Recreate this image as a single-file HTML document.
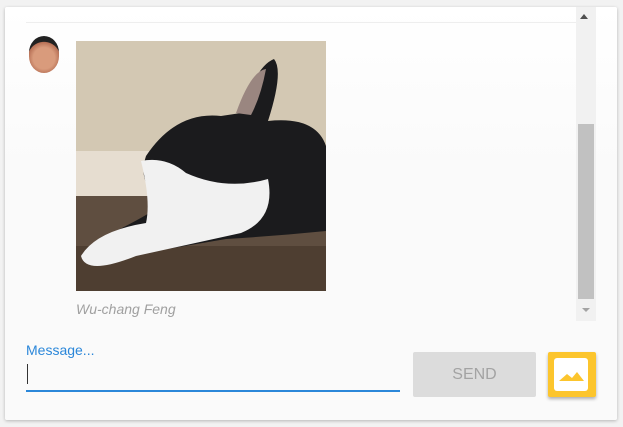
<!DOCTYPE html><html><head><style>
body{margin:0;width:623px;height:427px;background:#f2f2f2;font-family:"Liberation Sans",Arial,sans-serif;position:relative;overflow:hidden}
.card{position:absolute;left:5px;top:7px;width:612px;height:413px;background:linear-gradient(#fff,#fafafa 40%);border-radius:2px;box-shadow:0 1px 3px rgba(0,0,0,.25)}
.a{position:absolute}
</style></head><body>
<div class="card"></div>
<div class="a" style="left:26px;top:22px;width:550px;height:1px;background:#eee"></div>
<div class="a" style="left:576px;top:7px;width:20px;height:314px;background:#f1f1f1"></div>
<div class="a" style="left:580px;top:14px;border-left:4px solid transparent;border-right:4px solid transparent;border-bottom:5px solid #505050"></div>
<div class="a" style="left:578px;top:124px;width:16px;height:175px;background:#c1c1c1"></div>
<div class="a" style="left:582px;top:308px;border-left:4px solid transparent;border-right:4px solid transparent;border-top:4px solid #a3a3a3"></div>
<div class="a" style="left:29px;top:36px;width:30px;height:37px;border-radius:50%/45%;background:radial-gradient(circle at 50% 60%,#d99b7c 40%,#b77055 60%,#222 62%);"></div>
<svg class="a" style="left:76px;top:41px" width="250" height="250" viewBox="0 0 250 250">
<rect width="250" height="250" fill="#c4b8a2"/>
<rect width="250" height="155" fill="#d3c8b3"/>
<rect x="0" y="110" width="75" height="45" fill="#e6ddd0"/>
<rect x="0" y="155" width="250" height="95" fill="#5f4e40"/>
<rect x="0" y="205" width="250" height="45" fill="#4e3e31"/>
<path d="M70 115 Q100 70 145 75 L165 72 Q180 25 198 18 Q208 30 192 80 Q240 75 250 105 L250 190 Q200 195 150 198 L20 220 Q0 210 40 190 Q80 170 90 160 Q60 145 70 115Z" fill="#1b1b1d"/>
<path d="M65 120 Q90 115 110 132 Q150 150 192 138 Q200 178 165 192 L60 215 Q10 235 5 215 Q20 190 70 182 Q75 160 65 120Z" fill="#f1f1f1"/>
<path d="M160 72 Q175 30 190 28 Q185 55 175 74Z" fill="#9a8680"/>
</svg>
<div class="a" style="left:76px;top:301px;font-size:14px;font-style:italic;color:#a0a0a0">Wu-chang Feng</div>
<div class="a" style="left:26px;top:342px;font-size:14px;color:#2b87d9">Message...</div>
<div class="a" style="left:27px;top:364px;width:1px;height:20px;background:#333"></div>
<div class="a" style="left:26px;top:390px;width:374px;height:2px;background:#2b87d9"></div>
<div class="a" style="left:413px;top:352px;width:123px;height:45px;background:#dcdcdc;border-radius:2px;color:#a3a3a3;font-size:16px;text-align:center;line-height:45px">SEND</div>
<div class="a" style="left:548px;top:352px;width:48px;height:45px;background:#fcc52d;border-radius:2px;box-shadow:0 2px 3px rgba(0,0,0,.3)">
<div class="a" style="left:6px;top:6px;width:34px;height:33px;background:#fff;border-radius:3px"></div>
<svg class="a" style="left:11px;top:19px" width="26" height="12"><path d="M0 10 L8 3 L13 7 L18 1 L25 10Z" fill="#fcc52d"/></svg>
</div>
</body></html>
